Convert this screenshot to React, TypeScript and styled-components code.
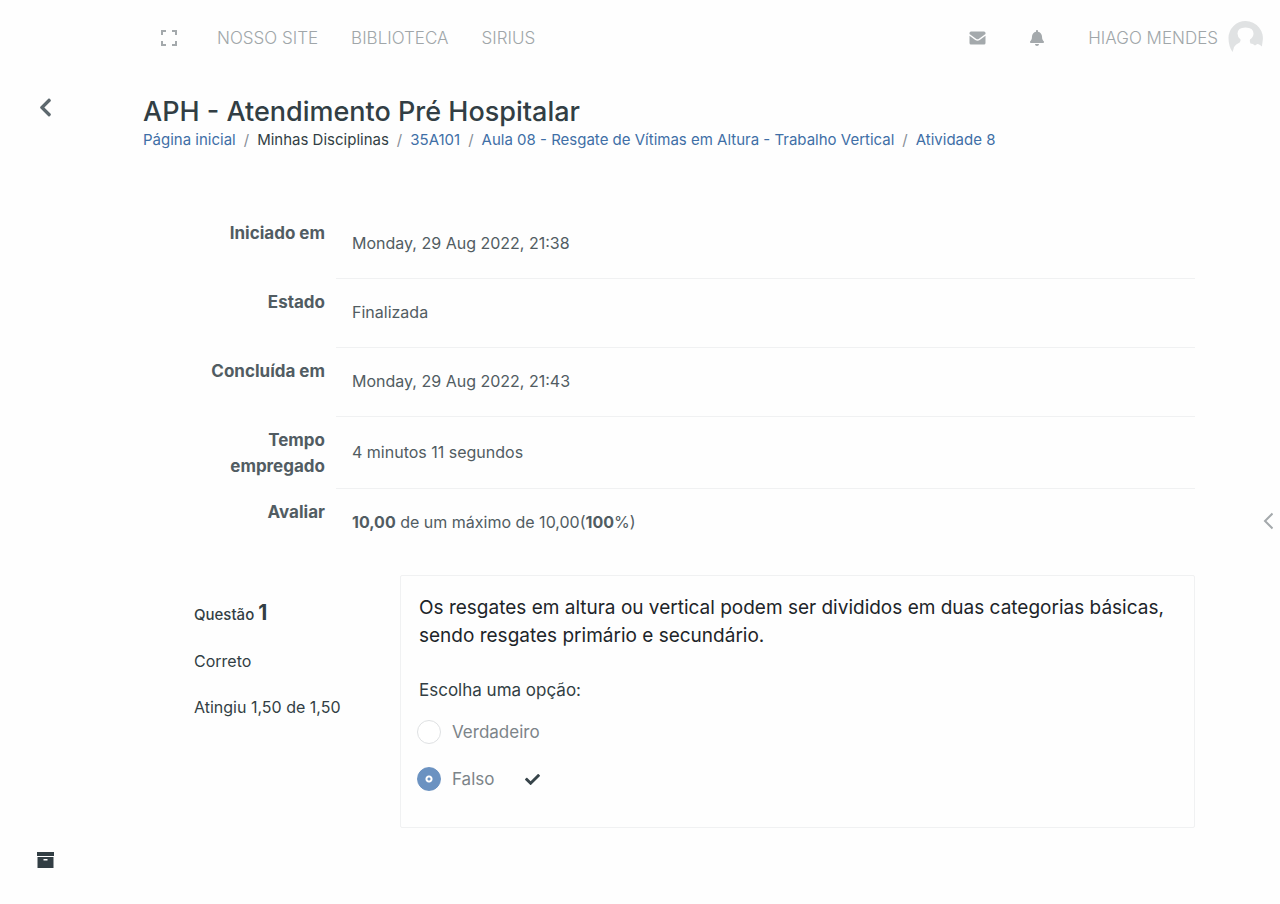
import React from "react";
import styled, { createGlobalStyle } from "styled-components";
import { FaBell, FaCheck, FaChevronLeft } from "react-icons/fa";

const GlobalStyle = createGlobalStyle`
  *, *::before, *::after { box-sizing: border-box; }
  body {
    margin: 0;
    background: #fefefe;
    color: #323e44;
    font-family: Inter, "Open Sans", sans-serif;
    font-size: 16px;
    line-height: 24px;
  }
  p, h1, ol, fieldset, legend { margin: 0; padding: 0; }
  svg { display: block; flex: none; }
`;

const Page = styled.div`
  min-height: 100vh;
  display: grid;
  grid-template-columns: 92px minmax(0, 1fr) 24px;
  grid-template-rows: 75px 1fr;
`;

const Header = styled.header`
  grid-column: 1 / -1;
  display: flex;
  align-items: center;
  justify-content: space-between;
  padding: 0 17px 0 160px;
`;

const Nav = styled.nav`
  display: flex;
  align-items: center;
  gap: 33px;
`;

const IconButton = styled.button<{ $color?: string }>`
  display: flex;
  align-items: center;
  justify-content: center;
  padding: 0;
  border: 0;
  background: none;
  cursor: pointer;
  color: ${(p) => p.$color ?? "#a4a9ac"};
`;

const FullscreenButton = styled(IconButton)`
  margin-right: 6px;
`;

const NavLink = styled.a`
  color: #a0a6a9;
  font-size: 17px;
  font-weight: 300;
  text-decoration: none;
`;

const UserArea = styled.div`
  display: flex;
  align-items: center;
  gap: 43px;
`;

const UserLink = styled(NavLink)`
  display: flex;
  align-items: center;
  gap: 10px;
`;

const Rail = styled.aside`
  display: flex;
  flex-direction: column;
  align-items: center;
  justify-content: space-between;
  padding: 22px 2px 36px 0;
`;

const Main = styled.main`
  padding: 20px 61px 40px 51px;
`;

const Title = styled.h1`
  font-size: 27px;
  line-height: 34px;
  font-weight: 500;
`;

const Crumbs = styled.ol`
  display: flex;
  flex-wrap: wrap;
  list-style: none;
  font-size: 15px;
  line-height: 22px;
`;

const Crumb = styled.li`
  & + &::before {
    content: "/";
    padding: 0 8px;
    color: #868e96;
  }
`;

const CrumbLink = styled.a`
  color: #3f6fa6;
  text-decoration: none;
`;

const Attempt = styled.div`
  padding: 59px 0 0 51px;
  min-width: 0;
`;

const Summary = styled.table`
  width: 100%;
  border-collapse: separate;
  border-spacing: 0;
  color: #515c62;
`;

const SummaryLabel = styled.th`
  width: 142px;
  padding: 10px 11px 10px 0;
  vertical-align: top;
  text-align: right;
  font-size: 17px;
  font-weight: 700;
  line-height: 26px;
`;

const SummaryValue = styled.td`
  padding: 21px 16px 23px;
  border-bottom: 1px solid #f0f1f2;
  vertical-align: middle;

  tr:last-child & {
    border-bottom: 0;
  }
`;

const Question = styled.section`
  display: grid;
  grid-template-columns: 206px minmax(0, 1fr);
  margin-top: 18px;
`;

const Info = styled.div`
  display: flex;
  flex-direction: column;
  gap: 22px;
  padding-top: 26px;
`;

const InfoTitle = styled.p`
  font-size: 15px;
  font-weight: 500;
`;

const InfoNumber = styled.strong`
  font-size: 21px;
  font-weight: 700;
`;

const Card = styled.div`
  padding: 18px 18px 36px;
  border: 1px solid #f0f1f2;
  border-radius: 2px;
`;

const QuestionText = styled.p`
  color: #1d2529;
  font-size: 19px;
  line-height: 28px;
`;

const Options = styled.fieldset`
  min-width: 0;
  margin-top: 28px;
  border: 0;
`;

const Legend = styled.legend`
  font-size: 17px;
  padding-bottom: 18px;
`;

const Option = styled.div`
  display: flex;
  align-items: center;
  height: 24px;

  & + & {
    margin-top: 23px;
  }

  svg {
    margin-left: 31px;
  }
`;

const Radio = styled.input`
  appearance: none;
  width: 24px;
  height: 24px;
  margin: 0 11px 0 -2px;
  border: 1px solid #dfe1e3;
  border-radius: 50%;
  background: #fff;

  &:checked {
    border-color: #6b92c1;
    background: radial-gradient(circle, #6b92c1 1px, #fff 2px, #fff 3px, #6b92c1 4px);
  }
`;

const OptionLabel = styled.label`
  color: #7c8489;
  font-size: 17px;
`;

const Edge = styled.aside`
  display: flex;
  align-items: center;
  justify-content: center;
  padding-top: 63px;
`;

const FullscreenIcon = () => (
  <svg width="18" height="18" viewBox="0 0 18 18" fill="none" stroke="currentColor" strokeWidth="2" aria-hidden="true">
    <path d="M2 6V2H6M12 2H16V6M16 12V16H12M6 16H2V12" />
  </svg>
);

const MailIcon = () => (
  <svg width="17" height="14" viewBox="0 0 17 14" aria-hidden="true">
    <path fill="currentColor" d="M2 .5h13a1.5 1.5 0 0 1 1.5 1.5v1L10 7.8Q8.500 8.800 7 7.800L.5 3V2A1.500 1.500 0 0 1 2 .5ZM.5 4.800 6.300 9Q8.500 10.500 10.700 9L16.500 4.800V12A1.500 1.500 0 0 1 15 13.500H2A1.500 1.500 0 0 1 .5 12Z" />
  </svg>
);

const Avatar = () => (
  <svg width="35" height="34" viewBox="0 0 35 34" aria-hidden="true">
    <path fill="#e0e2e3" d="M17.500 0A17.300 17.300 0 0 1 34.500 21Q34 24 34 25.500Q32 23.500 30 23Q29 22.500 27 24.500Q25 22.500 22.500 22.500Q21.500 20.500 22 18.500Q25.500 16 25.500 12.500Q25.500 6.500 17.500 6.500Q9.500 6.500 9.500 12.500Q9.500 16 12.500 18.500Q13 21.500 10 22.500Q6 24.500 5.500 28L4.500 31Q.5 25 .5 17A17.200 17.200 0 0 1 17.500 0Z" />
  </svg>
);

const ArchiveIcon = () => (
  <svg width="17" height="16" viewBox="0 0 17 16" fill="currentColor" aria-hidden="true">
    <path d="M0 0h17v4H0ZM.5 5h16v11H.5ZM6.500 7v1.500h4V7Z" fillRule="evenodd" />
  </svg>
);

const EdgeIcon = () => (
  <svg width="10" height="18" viewBox="0 0 10 18" fill="none" stroke="currentColor" strokeWidth="2" aria-hidden="true">
    <path d="M9.500 1.500 2 9 9.500 16.500" />
  </svg>
);

const rows: { label: string; value: React.ReactNode }[] = [
  { label: "Iniciado em", value: "Monday, 29 Aug 2022, 21:38" },
  { label: "Estado", value: "Finalizada" },
  { label: "Concluída em", value: "Monday, 29 Aug 2022, 21:43" },
  { label: "Tempo empregado", value: "4 minutos 11 segundos" },
  { label: "Avaliar", value: <><b>10,00</b> de um máximo de 10,00(<b>100</b>%)</> },
];

export default function App() {
  return (
    <>
      <GlobalStyle />
      <Page>
        <Header>
          <Nav>
            <FullscreenButton type="button" aria-label="Tela cheia"><FullscreenIcon /></FullscreenButton>
            <NavLink href="#site">NOSSO SITE</NavLink>
            <NavLink href="#biblioteca">BIBLIOTECA</NavLink>
            <NavLink href="#sirius">SIRIUS</NavLink>
          </Nav>
          <UserArea>
            <IconButton type="button" aria-label="Mensagens"><MailIcon /></IconButton>
            <IconButton type="button" aria-label="Notificações"><FaBell size={16} /></IconButton>
            <UserLink href="#perfil">HIAGO MENDES<Avatar /></UserLink>
          </UserArea>
        </Header>

        <Rail>
          <IconButton type="button" aria-label="Voltar" $color="#5d686e"><FaChevronLeft size={21} /></IconButton>
          <IconButton type="button" aria-label="Arquivo" $color="#323e44"><ArchiveIcon /></IconButton>
        </Rail>

        <Main>
          <Title>APH - Atendimento Pré Hospitalar</Title>
          <nav aria-label="Trilha">
            <Crumbs>
              <Crumb><CrumbLink href="#inicio">Página inicial</CrumbLink></Crumb>
              <Crumb>Minhas Disciplinas</Crumb>
              <Crumb><CrumbLink href="#35A101">35A101</CrumbLink></Crumb>
              <Crumb><CrumbLink href="#aula-08">Aula 08 - Resgate de Vítimas em Altura - Trabalho Vertical</CrumbLink></Crumb>
              <Crumb><CrumbLink href="#atividade-8">Atividade 8</CrumbLink></Crumb>
            </Crumbs>
          </nav>

          <Attempt>
            <Summary>
              <tbody>
                {rows.map((row) => (
                  <tr key={row.label}>
                    <SummaryLabel scope="row">{row.label}</SummaryLabel>
                    <SummaryValue>{row.value}</SummaryValue>
                  </tr>
                ))}
              </tbody>
            </Summary>

            <Question>
              <Info>
                <InfoTitle>Questão <InfoNumber>1</InfoNumber></InfoTitle>
                <p>Correto</p>
                <p>Atingiu 1,50 de 1,50</p>
              </Info>
              <Card>
                <QuestionText>
                  Os resgates em altura ou vertical podem ser divididos em duas categorias básicas, sendo resgates primário e secundário.
                </QuestionText>
                <Options>
                  <Legend>Escolha uma opção:</Legend>
                  <Option>
                    <Radio type="radio" name="resposta" id="verdadeiro" />
                    <OptionLabel htmlFor="verdadeiro">Verdadeiro</OptionLabel>
                  </Option>
                  <Option>
                    <Radio type="radio" name="resposta" id="falso" defaultChecked />
                    <OptionLabel htmlFor="falso">Falso</OptionLabel>
                    <FaCheck size={15} color="#37444a" role="img" aria-label="Correto" />
                  </Option>
                </Options>
              </Card>
            </Question>
          </Attempt>
        </Main>

        <Edge>
          <IconButton type="button" aria-label="Abrir painel"><EdgeIcon /></IconButton>
        </Edge>
      </Page>
    </>
  );
}
